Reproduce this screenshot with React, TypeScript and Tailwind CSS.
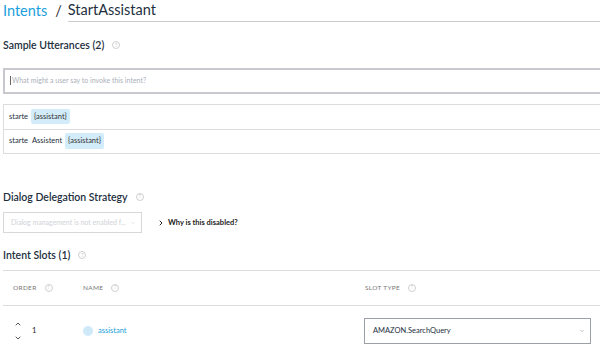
import React from 'react';
import { ChevronDown, ChevronUp, ChevronRight } from 'lucide-react';

const Help = () => (
  <span className="ml-[8px] inline-flex h-[8px] w-[8px] items-center justify-center rounded-full border border-[#d0d0d0] text-[5px] leading-none text-[#c8c8c8]">
    ?
  </span>
);

const Chip = ({ children }: { children: React.ReactNode }) => (
  <span className="-ml-[1px] rounded-[2px] bg-[#d3ecfa] px-[3px] py-[2px] text-[#333]">{children}</span>
);

const App = () => {
  const utterances = [
    ['starte'],
    ['starte', 'Assistent'],
  ];

  return (
    <div className="h-[349px] w-[600px] overflow-hidden bg-white pl-[3px] text-[#232f3e]" style={{ fontFamily: 'Lato, "Open Sans", sans-serif' }}>
      {/* breadcrumb */}
      <div className="flex h-[22px] items-end text-[14.5px] leading-none">
        <span className="mb-[4px] text-[#1a9fdc]">Intents</span>
        <span className="mb-[4px] ml-[8px] mr-[6px] text-[#333]">/</span>
        <span className="flex-1 border-b border-[#ccc] pb-[4px] text-[#232f3e]">StartAssistant</span>
      </div>

      <div className="mt-[18px] flex items-center text-[10.5px] font-semibold leading-none">
        Sample Utterances (2) <Help />
      </div>

      <div className="mt-[17px] flex h-[26px] items-center border-2 border-r-0 border-[#c8c8ce] pl-[5px] text-[7px] text-[#aab0b8]">
        <span className="mr-[1px] h-[9px] w-px bg-[#666]" />
        What might a user say to invoke this intent?
      </div>

      <div className="mt-[10px] border border-r-0 border-[#dcdcdc] text-[7.5px]">
        {utterances.map((words, i) => (
          <div key={i} className={`flex h-[24px] items-center gap-[4px] pl-[5px] ${i > 0 ? 'border-t border-[#dcdcdc]' : ''}`}>
            {words.map((w) => (
              <span key={w}>{w}</span>
            ))}
            <Chip>{'{assistant}'}</Chip>
          </div>
        ))}
      </div>

      <div className="mt-[38px] flex items-center text-[10.5px] font-semibold leading-none">
        Dialog Delegation Strategy <Help />
      </div>

      <div className="mt-[10px] flex items-center">
        <div className="flex h-[21px] w-[139px] items-center justify-between border border-[#d8d8d8] pl-[7px] pr-[5px] text-[7px] text-[#cfd3d7]">
          <span className="whitespace-nowrap">Dialog management is not enabled f...</span>
          <ChevronDown className="h-[6px] w-[6px] shrink-0" strokeWidth={2} />
        </div>
        <ChevronRight className="ml-[15px] h-[8px] w-[8px] text-[#222]" strokeWidth={3} />
        <span className="ml-[3px] text-[7.5px] font-bold text-[#222]">Why is this disabled?</span>
      </div>

      <div className="mt-[17px] flex items-center text-[10.5px] font-semibold leading-none">
        Intent Slots (1) <Help />
      </div>

      <div className="mt-[9px] border-t border-[#ddd]">
        <div className="flex h-[35px] items-center border-b border-[#ddd] text-[6.5px] tracking-[0.3px] text-[#777]">
          <div className="flex w-[80px] items-center pl-[10px]">ORDER <Help /></div>
          <div className="flex w-[282px] items-center">NAME <Help /></div>
          <div className="flex items-center">SLOT TYPE <Help /></div>
        </div>
        <div className="flex h-[50px] items-center text-[7.5px]">
          <div className="flex w-[80px] items-center pl-[11px]">
            <div className="flex flex-col gap-[6px] text-[#333]">
              <ChevronUp className="h-[8px] w-[8px]" strokeWidth={2.5} />
              <ChevronDown className="h-[8px] w-[8px]" strokeWidth={2.5} />
            </div>
            <span className="ml-[10px] text-[#222]">1</span>
          </div>
          <div className="flex w-[281px] items-center">
            <span className="h-[10px] w-[10px] rounded-full bg-[#cfe9f9]" />
            <span className="ml-[5px] text-[#1a9fdc]">assistant</span>
          </div>
          <div className="flex h-[26px] w-[227px] items-center justify-between border border-[#9aa0a6] pl-[8px] pr-[5px] text-[#232f3e]">
            <span>AMAZON.SearchQuery</span>
            <ChevronDown className="h-[6px] w-[6px] text-[#888]" strokeWidth={2} />
          </div>
        </div>
      </div>
    </div>
  );
};

export default App;
